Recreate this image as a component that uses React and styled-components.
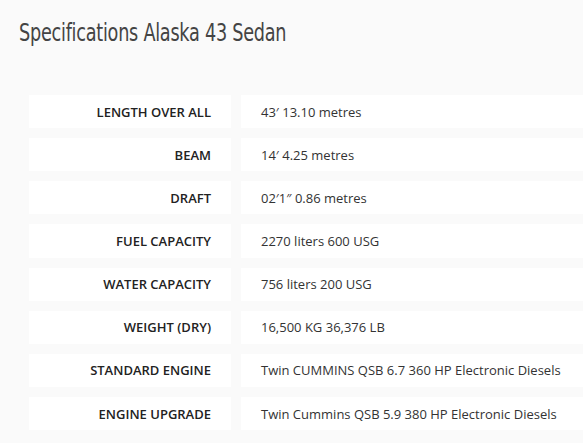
import React from "react";
import styled, { createGlobalStyle } from "styled-components";

const Global = createGlobalStyle`
  html, body { margin: 0; padding: 0; background: #fafafa; }
  body { font-family: "Open Sans", "Liberation Sans", sans-serif; }
`;

const Page = styled.div`
  padding: 19px 0 0 19px;
  overflow: hidden;
  width: 583px;
  box-sizing: border-box;
`;

const Title = styled.h2`
  margin: 0;
  font-family: "DejaVu Sans Condensed", "DejaVu Sans", sans-serif;
  font-weight: 400;
  font-size: 24px;
  line-height: 28px;
  color: #444;
  letter-spacing: -0.3px;
  transform: scaleX(0.817);
  transform-origin: left center;
  white-space: nowrap;
`;

const Table = styled.div`
  margin-top: 48px;
  padding-left: 10px;
  display: grid;
  grid-template-columns: 202px 360px;
  column-gap: 10px;
  row-gap: 10px;
`;

const Cell = styled.div`
  background: #fff;
  height: 33.15px;
  display: flex;
  align-items: center;
  font-size: 13px;
  padding: 0 20px;
  white-space: nowrap;
  justify-content: ${(p) => (p.$label ? "flex-end" : "flex-start")};
  font-weight: ${(p) => (p.$label ? 600 : 400)};
  color: ${(p) => (p.$label ? "#222" : "#333")};
`;

const rows = [
  ["LENGTH OVER ALL", "43\u2032 13.10 metres"],
  ["BEAM", "14\u2032 4.25 metres"],
  ["DRAFT", "02\u20321\u2033 0.86 metres"],
  ["FUEL CAPACITY", "2270 liters 600 USG"],
  ["WATER CAPACITY", "756 liters 200 USG"],
  ["WEIGHT (DRY)", "16,500 KG 36,376 LB"],
  ["STANDARD ENGINE", "Twin CUMMINS QSB 6.7 360 HP Electronic Diesels"],
  ["ENGINE UPGRADE", "Twin Cummins QSB 5.9 380 HP Electronic Diesels"],
];

export default function App() {
  return (
    <>
      <Global />
      <Page>
        <Title>Specifications Alaska 43 Sedan</Title>
        <Table>
          {rows.map(([k, v]) => (
            <React.Fragment key={k}>
              <Cell $label>{k}</Cell>
              <Cell>{v}</Cell>
            </React.Fragment>
          ))}
        </Table>
      </Page>
    </>
  );
}
